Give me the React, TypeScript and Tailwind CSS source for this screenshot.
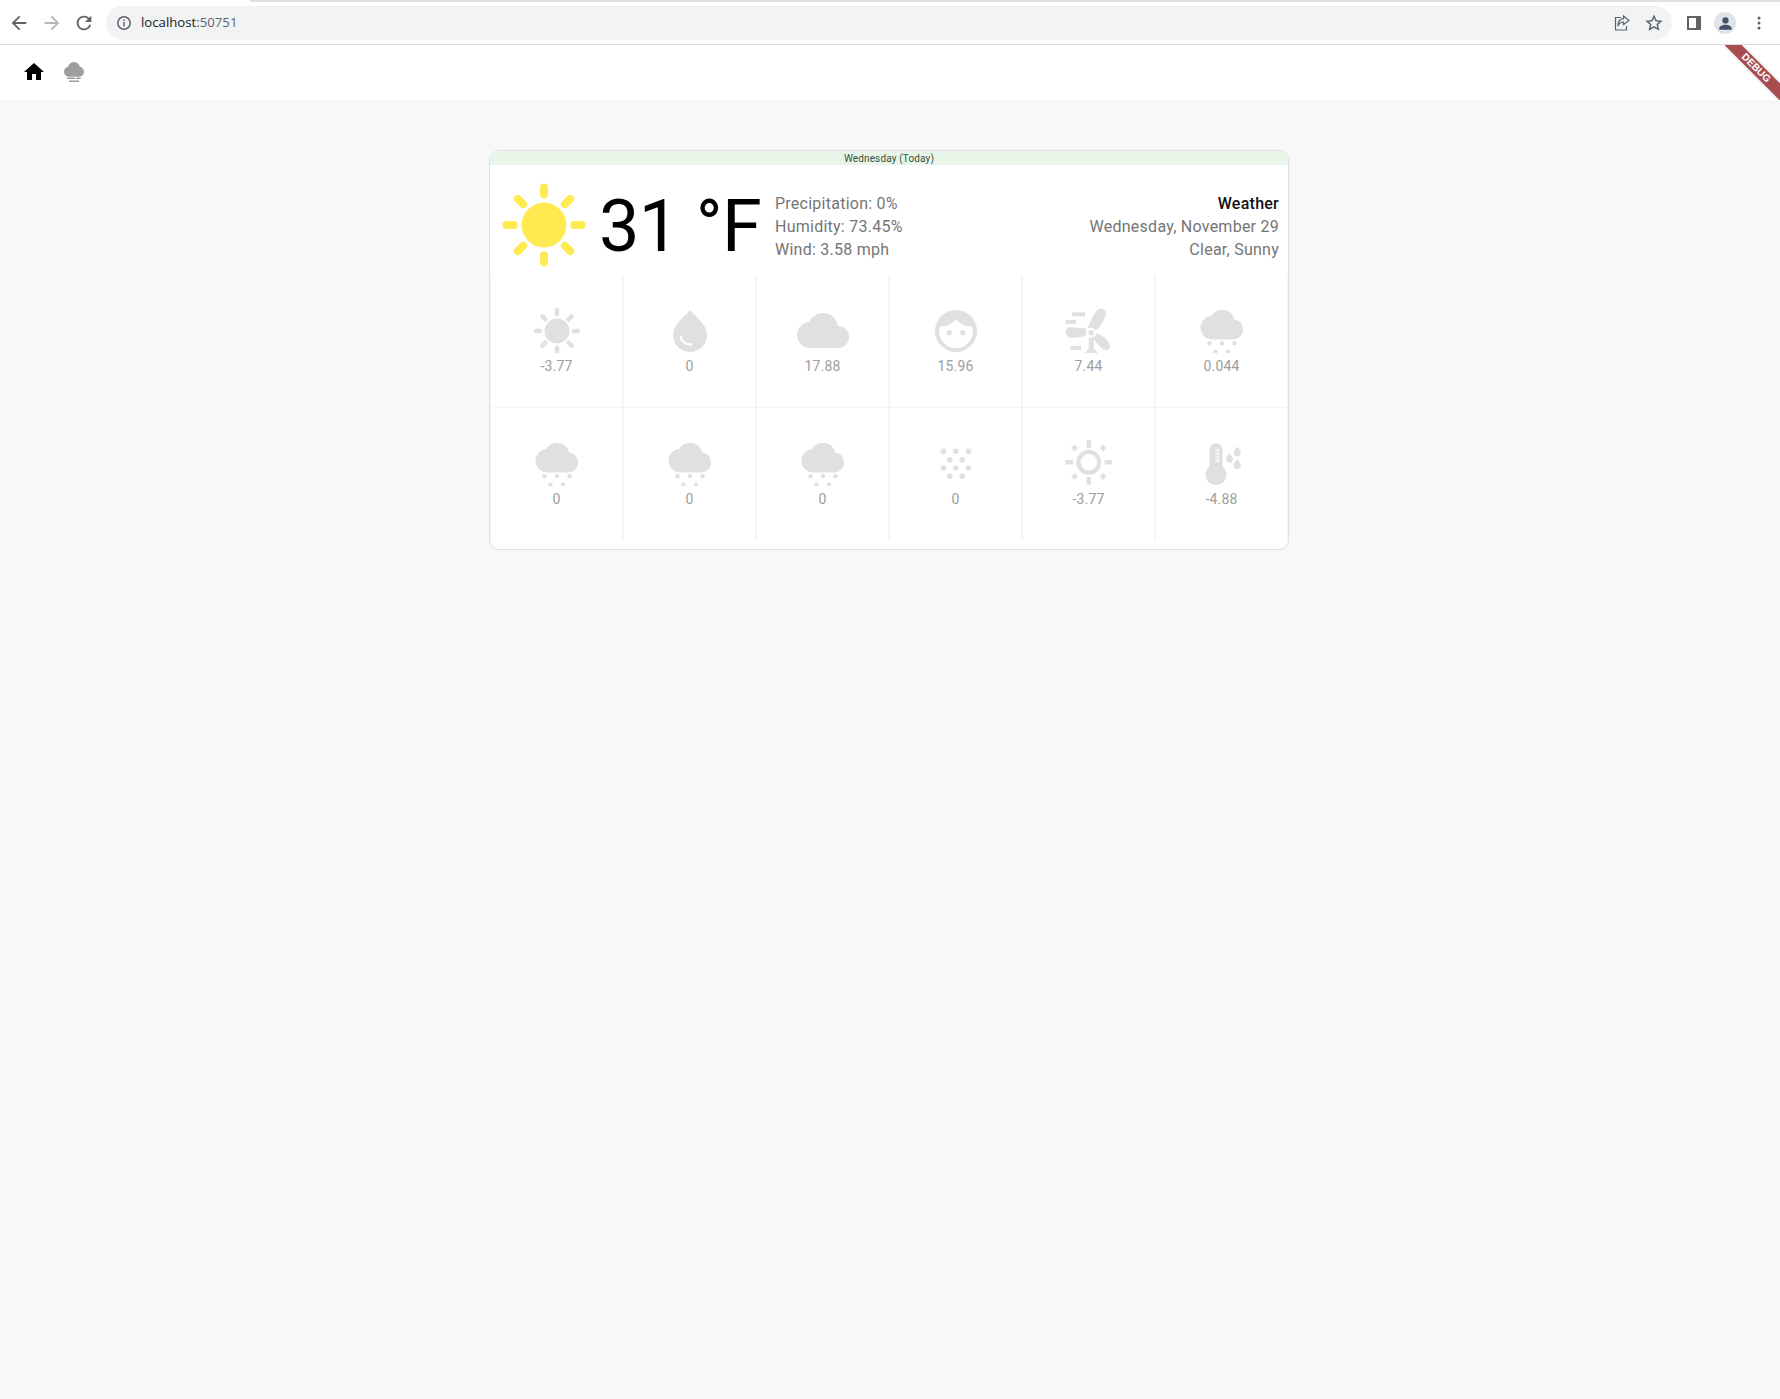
import React from 'react';

const GRAY = '#e0e0e0';

const Rays = ({ color }: { color: string }) => (
  <g stroke={color} strokeWidth={4.4} strokeLinecap="round">
    <line x1="24" y1="5" x2="24" y2="9" />
    <line x1="24" y1="43" x2="24" y2="47" />
    <line x1="3" y1="26" x2="7" y2="26" />
    <line x1="41" y1="26" x2="45" y2="26" />
    <line x1="9.4" y1="11.4" x2="12.4" y2="14.4" />
    <line x1="38.6" y1="11.4" x2="35.6" y2="14.4" />
    <line x1="9.4" y1="40.6" x2="12.4" y2="37.6" />
    <line x1="38.6" y1="40.6" x2="35.6" y2="37.6" />
  </g>
);

const SunIcon = ({ color = GRAY, size = 48, viewBox = '0 0 48 48' }: { color?: string; size?: number; viewBox?: string }) => (
  <svg width={size} height={size} viewBox={viewBox} className="shrink-0">
    <circle cx="24" cy="26" r="12.5" fill={color} />
    <Rays color={color} />
  </svg>
);

const DropIcon = () => (
  <svg width="48" height="48" viewBox="0 0 48 48">
    <path d="M24 5C30 12 41 20 41 30A17 17 0 0 1 7 30C7 20 18 12 24 5Z" fill={GRAY} />
    <path d="M15 32C15.5 37 20 39.5 25 39.5" fill="none" stroke="#fff" strokeWidth="2.4" strokeLinecap="round" />
  </svg>
);

const CloudIcon = () => (
  <svg width="48" height="48" viewBox="0 0 48 48" overflow="visible">
    <g fill={GRAY}>
      <circle cx="24" cy="23" r="15" />
      <circle cx="11" cy="30" r="13" />
      <circle cx="39" cy="32" r="11" />
      <rect x="11" y="30" width="28" height="13" />
    </g>
  </svg>
);

const FaceIcon = () => (
  <svg width="48" height="48" viewBox="0 0 48 48">
    <circle cx="24" cy="26" r="21" fill={GRAY} />
    <path d="M8 21.7C14 21.7 20 19 24 14.3C28 19 34 21.7 40 21.7A16.7 16.7 0 1 1 8 21.7Z" fill="#fff" />
    <circle cx="17.3" cy="27.7" r="2.6" fill={GRAY} />
    <circle cx="30.7" cy="27.7" r="2.6" fill={GRAY} />
  </svg>
);

const TurbineIcon = () => (
  <svg width="48" height="48" viewBox="0 0 48 48">
    <g fill={GRAY}>
      <rect x="7" y="7.3" width="13" height="4" />
      <rect x="0.5" y="15" width="10.5" height="4" />
      <rect x="5.5" y="40.7" width="10.5" height="4.2" />
      <path d="M22 23L31 6Q34 2.5 38 4Q42 6 40.5 11Q37 21 31 25Z" />
      <path d="M21 23.5L5 22Q1 22.5 1 27Q1 31.5 5 32.5Q15 33.5 22 30Z" />
      <path d="M31 28Q39 30 44 38Q46.5 43 43 44.8Q39 46 36.5 43L27 33Z" />
      <path d="M24 32L28.5 32L29 44L33 48H20L23.5 44Z" />
      <circle cx="26.2" cy="27.7" r="5" fill="#fff" />
      <circle cx="26.2" cy="27.7" r="2.6" />
    </g>
  </svg>
);

const SnowCloudIcon = () => (
  <svg width="48" height="48" viewBox="0 0 48 48">
    <g fill={GRAY}>
      <circle cx="24" cy="17" r="12.3" />
      <circle cx="14.2" cy="22.7" r="11.7" />
      <circle cx="35.2" cy="24.4" r="10" />
      <rect x="14" y="22" width="21" height="12.4" />
      <circle cx="11.5" cy="38.3" r="2.2" />
      <circle cx="24" cy="38.3" r="2.2" />
      <circle cx="36.5" cy="38.3" r="2.2" />
      <circle cx="17.5" cy="46.8" r="2.2" />
      <circle cx="30" cy="46.8" r="2.2" />
    </g>
  </svg>
);

const DotsIcon = () => {
  const dots = [
    [11.5, 13.3], [23.8, 13.3], [36.5, 13.3],
    [17.8, 21.7], [30.2, 21.7],
    [11.5, 30], [23.8, 30], [36.5, 30],
    [17.8, 38.3], [30.2, 38.3],
  ];
  return (
    <svg width="48" height="48" viewBox="0 0 48 48">
      {dots.map(([x, y]) => (
        <circle key={`${x}-${y}`} cx={x} cy={y} r="2.8" fill={GRAY} />
      ))}
    </svg>
  );
};

const SunOutlineIcon = () => (
  <svg width="48" height="48" viewBox="0 0 48 48">
    <circle cx="23.8" cy="24.3" r="10.4" fill="none" stroke={GRAY} strokeWidth="4.2" />
    <g fill={GRAY}>
      <rect x="21.6" y="2" width="4.4" height="7.6" />
      <rect x="21.6" y="39" width="4.4" height="7.6" />
      <rect x="0.5" y="22.1" width="7.6" height="4.4" />
      <rect x="39.5" y="22.1" width="7.6" height="4.4" />
      <path d="M9.5 6.5L13 10L9.5 13.5L6 10Z" />
      <path d="M38 6.5L41.5 10L38 13.5L34.5 10Z" />
      <path d="M9.5 35L13 38.5L9.5 42L6 38.5Z" />
      <path d="M38 35L41.5 38.5L38 42L34.5 38.5Z" />
    </g>
  </svg>
);

const ThermoIcon = () => (
  <svg width="48" height="48" viewBox="0 0 48 48">
    <g fill={GRAY}>
      <circle cx="18" cy="36.5" r="10.5" />
      <rect x="11.5" y="5.3" width="13" height="30" rx="6.5" />
      <path d="M39.2 8.5C41 11 42.8 12.5 42.8 14.8A3.6 3.6 0 0 1 35.6 14.8C35.6 12.5 37.4 11 39.2 8.5Z" />
      <path d="M31.5 15.2C33.2 17.5 35 19 35 21.2A3.5 3.5 0 0 1 28 21.2C28 19 29.8 17.5 31.5 15.2Z" />
      <path d="M39.2 21C41 23.4 42.8 25 42.8 27.3A3.6 3.6 0 0 1 35.6 27.3C35.6 25 37.4 23.4 39.2 21Z" />
    </g>
    <path d="M20 11V24M17 12H20M17 15.5H20M17 19H20M17 22.5H20" fill="none" stroke="#fff" strokeWidth="1.2" />
  </svg>
);

const Cell = ({ icon, value }: { icon: React.ReactNode; value: string }) => (
  <div className="flex h-[132px] flex-col items-center border-x border-[#f5f5f5] pt-[30px]">
    <div className="h-[48px] w-[48px]">{icon}</div>
    <span className="mt-[3px] text-[14px] leading-[20px] tracking-[0.15px] text-[#9e9e9e]">{value}</span>
  </div>
);

const row1 = [
  { icon: <SunIcon />, value: '-3.77' },
  { icon: <DropIcon />, value: '0' },
  { icon: <CloudIcon />, value: '17.88' },
  { icon: <FaceIcon />, value: '15.96' },
  { icon: <TurbineIcon />, value: '7.44' },
  { icon: <SnowCloudIcon />, value: '0.044' },
];

const row2 = [
  { icon: <SnowCloudIcon />, value: '0' },
  { icon: <SnowCloudIcon />, value: '0' },
  { icon: <SnowCloudIcon />, value: '0' },
  { icon: <DotsIcon />, value: '0' },
  { icon: <SunOutlineIcon />, value: '-3.77' },
  { icon: <ThermoIcon />, value: '-4.88' },
];

const BrowserBar = () => (
  <div className="bg-white font-['Open_Sans',sans-serif]">
    <div className="flex h-[2px]">
      <div className="w-[250px]" />
      <div className="flex-1 bg-[#dee1e6]" />
    </div>
    <div className="flex h-[43px] items-center border-b border-[#dadce0] pl-[8px] pr-[19px]">
      <svg width="22" height="22" viewBox="0 0 24 24" fill="#5f6368">
        <path d="M20 11H7.83l5.59-5.59L12 4l-8 8 8 8 1.41-1.41L7.83 13H20v-2z" />
      </svg>
      <svg width="22" height="22" viewBox="0 0 24 24" fill="#b5b7ba" className="ml-[11px]">
        <path d="M4 11h12.17l-5.59-5.59L12 4l8 8-8 8-1.41-1.41L16.17 13H4v-2z" />
      </svg>
      <svg width="22" height="22" viewBox="0 0 24 24" fill="#5f6368" className="ml-[10px]">
        <path d="M17.65 6.35C16.2 4.9 14.21 4 12 4c-4.42 0-7.99 3.58-7.99 8s3.57 8 7.99 8c3.73 0 6.84-2.55 7.73-6h-2.08c-.82 2.33-3.04 4-5.65 4-3.31 0-6-2.69-6-6s2.69-6 6-6c1.66 0 3.14.69 4.22 1.78L13 11h7V4l-2.35 2.35z" />
      </svg>
      <div className="ml-[11px] flex h-[34px] flex-1 items-center rounded-full bg-[#f1f3f4] pl-[10px] pr-[9px]">
        <svg width="16" height="16" viewBox="0 0 16 16" fill="none" stroke="#5f6368" strokeWidth="1.5">
          <circle cx="8" cy="8" r="6.2" />
          <path d="M8 7v4.4M8 4.4v1.5" />
        </svg>
        <span className="ml-[9px] text-[13.2px] leading-none text-[#202124]">
          localhost<span className="text-[#5f6368]">:50751</span>
        </span>
        <svg width="18" height="18" viewBox="0 0 18 18" fill="none" stroke="#5f6368" strokeWidth="1.2" className="ml-auto">
          <path d="M8 3.5H2.5V16H13.5V12" />
          <path d="M10.5 2L16 6.5L10.5 10.5V8C8 8 6 9.5 5 12C5 8 7 5 10.5 4.7Z" />
        </svg>
        <svg width="18" height="18" viewBox="0 0 24 24" fill="none" stroke="#5f6368" strokeWidth="2" className="ml-[14px]">
          <path d="M12 3l2.8 6 6.4.7-4.8 4.3 1.4 6.4L12 17.1l-5.8 3.3 1.4-6.4-4.8-4.3 6.4-.7z" />
        </svg>
      </div>
      <div className="ml-[15px] flex h-[14px] w-[14px] border-[2px] border-r-[5px] border-[#5f6368] bg-white" />
      <div className="ml-[13px] flex h-[22px] w-[22px] items-center justify-center rounded-full bg-[#dfe3ea]">
        <svg width="15" height="15" viewBox="0 0 24 24" fill="#45506b">
          <path d="M12 12a5 5 0 1 0 0-10 5 5 0 0 0 0 10zm0 2c-4 0-10 2-10 6v2h20v-2c0-4-6-6-10-6z" />
        </svg>
      </div>
      <svg width="4" height="14" viewBox="0 0 4 14" fill="#5f6368" className="ml-[21px]">
        <circle cx="2" cy="2" r="1.5" />
        <circle cx="2" cy="7" r="1.5" />
        <circle cx="2" cy="12" r="1.5" />
      </svg>
    </div>
  </div>
);

const DebugBanner = () => (
  <div className="pointer-events-none absolute right-0 top-[45px] h-[55px] w-[55px] overflow-hidden">
    <div className="absolute left-[-19px] top-[17px] flex h-[12px] w-[100px] rotate-45 items-center justify-center bg-[#a94c50] font-['Liberation_Sans',sans-serif] text-[10px] font-bold leading-none text-white shadow-[0_0_3px_rgba(0,0,0,0.25)]">
      DEBUG
    </div>
  </div>
);

export default function App() {
  return (
    <div className="relative min-h-[1399px] bg-[#f8f8f8] font-['Roboto',sans-serif]">
      <BrowserBar />
      <DebugBanner />

      <nav className="flex h-[55px] items-center gap-[16px] bg-white pb-[2px] pl-[22px]">
        <svg width="24" height="24" viewBox="0 0 24 24" fill="#000">
          <path d="M10 20v-6h4v6h5v-8h3L12 3 2 12h3v8z" />
        </svg>
        <svg width="24" height="24" viewBox="0 0 24 24" fill="#9e9e9e">
          <circle cx="12" cy="8" r="6" />
          <circle cx="7" cy="11.7" r="5" />
          <circle cx="17" cy="11.7" r="5" />
          <rect x="7" y="10" width="10" height="6.7" />
          <rect x="5" y="17.5" width="8" height="1.5" />
          <rect x="14" y="17.5" width="4.7" height="1.5" />
          <rect x="7" y="20.5" width="10" height="1.5" />
        </svg>
      </nav>

      <main className="pl-[489px] pt-[50px]">
        <div className="h-[400px] w-[800px] overflow-hidden rounded-[10px] border border-[#e0e0e0] bg-white">
          <div className="flex h-[14px] items-center justify-center bg-[#e8f5e9] pt-[1px] text-[10px] leading-none tracking-[0.15px] text-[#37513b]">
            Wednesday (Today)
          </div>

          <div className="flex h-[110px] items-center pl-[11px] pr-[9px] pt-[10px]">
            <SunIcon color="#ffeb4f" size={86} viewBox="0 2 48 48" />
            <span className="ml-[12px] mt-[3px] text-[72px] leading-none tracking-[-0.7px] text-black">31 °F</span>
            <div className="ml-[14px] mt-[2px] text-[16px] leading-[23px] tracking-[0.25px] text-[#757575]">
              <div>Precipitation: 0%</div>
              <div>Humidity: 73.45%</div>
              <div>Wind: 3.58 mph</div>
            </div>
            <div className="ml-auto mt-[2px] text-right text-[16px] leading-[23px] tracking-[0.25px] text-[#757575]">
              <div className="font-medium text-[#111]">Weather</div>
              <div>Wednesday, November 29</div>
              <div>Clear, Sunny</div>
            </div>
          </div>

          <div className="grid grid-cols-6 border-b border-[#f5f5f5]">
            {row1.map((c, i) => (
              <Cell key={i} icon={c.icon} value={c.value} />
            ))}
          </div>
          <div className="grid grid-cols-6">
            {row2.map((c, i) => (
              <Cell key={i} icon={c.icon} value={c.value} />
            ))}
          </div>
        </div>
      </main>
    </div>
  );
}
